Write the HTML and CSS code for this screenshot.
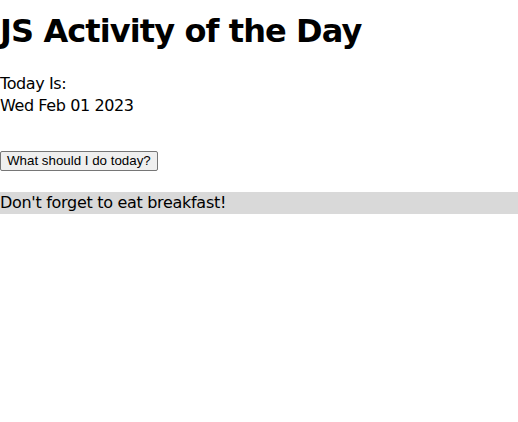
FILE: index.html
```html
<!DOCTYPE html>
<html>
<head>
<meta charset="utf-8">
<link rel="stylesheet" href="styles.css">
</head>
<body>
<h1 class="title">JS Activity of the Day</h1>
<p class="today">Today Is:<br>Wed Feb 01 2023</p>
<div class="actions"><button class="btn">What should I do today?</button></div>
<div class="activity">Don't forget to eat breakfast!</div>
</body>
</html>
```
FILE: styles.css
```css
html, body {
  margin: 0;
  padding: 0;
  background: #ffffff;
}
body {
  font-family: "Comic Sans MS", "DejaVu Sans", sans-serif;
  color: #000;
  font-size: 16px;
}
.title {
  font-size: 32px;
  font-weight: bold;
  line-height: 44px;
  letter-spacing: -0.9px;
  margin: 0;
  padding-top: 9px;
}
.today {
  margin: 0;
  padding-top: 20px;
  line-height: 22px;
  letter-spacing: -0.4px;
}
.actions {
  padding-top: 33px;
}
.btn {
  font-family: Arial, "Liberation Sans", sans-serif;
  font-size: 13.333px;
  background: #efefef;
  color: #000;
  border: 1px solid #767676;
  border-radius: 2px;
  padding: 1px 6px;
  height: 20px;
  margin: 0;
}
.activity {
  margin-top: 21px;
  background: #d9d9d9;
  line-height: 22px;
  height: 22px;
  letter-spacing: -0.3px;
}
```
